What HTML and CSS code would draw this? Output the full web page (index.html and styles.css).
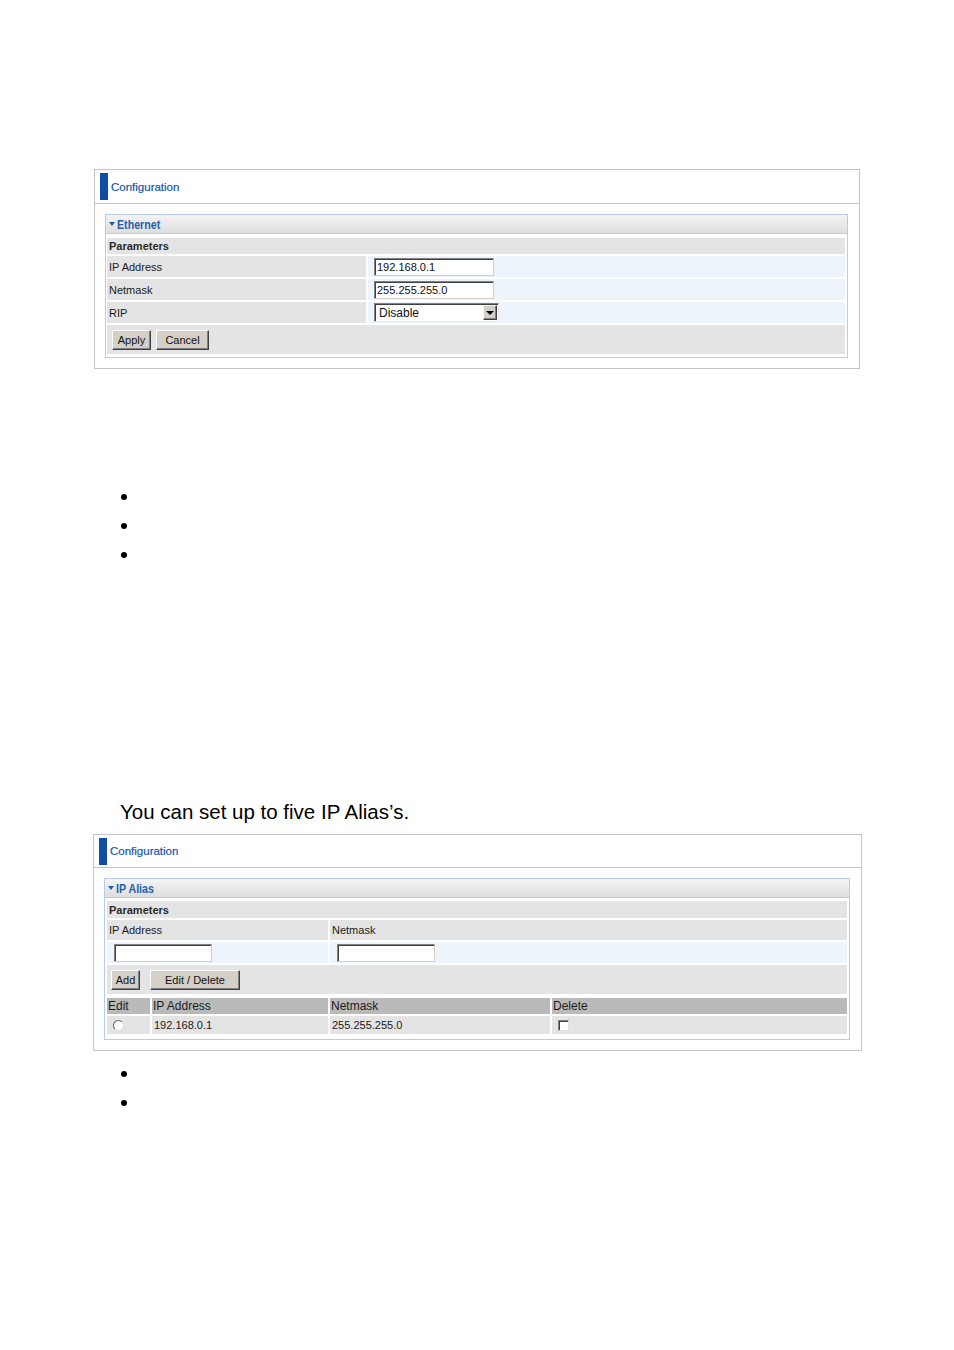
FILE: index.html
```html
<!DOCTYPE html>
<html lang="en">
<head>
    <meta charset="UTF-8">
    <meta name="viewport" content="width=device-width, initial-scale=1.0">
    <title>LAN Configuration</title>
    <link rel="stylesheet" href="styles.css">
</head>
<body>
    <div class="page">
        <!-- Ethernet settings -->
        <div class="config-box box-ethernet">
            <div class="config-head">
                <span class="config-bar"></span>
                <span class="config-title">Configuration</span>
            </div>
            <div class="config-body">
                <div class="panel">
                    <div class="panel-head"><span class="caret"></span><span class="panel-name">Ethernet</span></div>
                    <div class="panel-grid eth-grid">
                        <div class="cell cell-title row-title span-all">Parameters</div>

                        <div class="cell label row-data">IP Address</div>
                        <div class="cell value row-data"><input class="textbox eth-textbox" type="text" value="192.168.0.1"></div>

                        <div class="cell label row-data">Netmask</div>
                        <div class="cell value row-data"><input class="textbox eth-textbox" type="text" value="255.255.255.0"></div>

                        <div class="cell label row-data">RIP</div>
                        <div class="cell value row-data">
                            <div class="select">
                                <span class="select-text">Disable</span>
                                <span class="select-arrow"><span class="arrow-down"></span></span>
                            </div>
                        </div>

                        <div class="cell cell-title row-buttons span-all">
                            <button class="btn btn-apply" type="button">Apply</button>
                            <button class="btn btn-cancel" type="button">Cancel</button>
                        </div>
                    </div>
                </div>
            </div>
        </div>

        <ul class="bullets bullets-first">
            <li>&nbsp;</li>
            <li>&nbsp;</li>
            <li>&nbsp;</li>
        </ul>

        <p class="note">You can set up to five IP Alias’s.</p>

        <!-- IP alias settings -->
        <div class="config-box box-alias">
            <div class="config-head">
                <span class="config-bar"></span>
                <span class="config-title">Configuration</span>
            </div>
            <div class="config-body">
                <div class="panel">
                    <div class="panel-head"><span class="caret"></span><span class="panel-name">IP Alias</span></div>
                    <div class="panel-grid alias-grid">
                        <div class="cell cell-title alias-title span-all">Parameters</div>

                        <div class="cell label alias-label">IP Address</div>
                        <div class="cell label alias-label">Netmask</div>

                        <div class="cell value alias-input"><input class="textbox alias-textbox" type="text" value=""></div>
                        <div class="cell value alias-input"><input class="textbox alias-textbox" type="text" value=""></div>

                        <div class="cell cell-title alias-buttons span-all">
                            <button class="btn btn-add" type="button">Add</button>
                            <button class="btn btn-edit" type="button">Edit / Delete</button>
                        </div>
                    </div>

                    <div class="alias-table">
                        <div class="cell th">Edit</div>
                        <div class="cell th">IP Address</div>
                        <div class="cell th">Netmask</div>
                        <div class="cell th">Delete</div>

                        <div class="cell td td-radio"><span class="radio"></span></div>
                        <div class="cell td">192.168.0.1</div>
                        <div class="cell td">255.255.255.0</div>
                        <div class="cell td td-check"><span class="checkbox"></span></div>
                    </div>
                </div>
            </div>
        </div>

        <ul class="bullets bullets-second">
            <li>&nbsp;</li>
            <li>&nbsp;</li>
        </ul>
    </div>
</body>
</html>
```

FILE: styles.css
```css
/* Page looks like a printed manual page with two router screenshots */
body {
    font-family: "Liberation Sans", Arial, sans-serif;
    margin: 0;
    padding: 0;
    background-color: #fff;
    color: #1a1a1a;
}

.page {
    padding-top: 169px;
}

/* Outer "Configuration" frame */
.config-box {
    box-sizing: border-box;
    border: 1px solid #c4c4c4;
    background-color: #fff;
}

.box-ethernet {
    width: 766px;
    margin-left: 94px;
}

.box-alias {
    width: 769px;
    margin-left: 93px;
    margin-top: 10px;
}

.config-head {
    display: flex;
    align-items: center;
    gap: 3px;
    padding-left: 5px;
    border-bottom: 1px solid #c4c4c4;
}

.box-ethernet .config-head {
    height: 33px;
}

.box-alias .config-head {
    height: 32px;
}

.config-bar {
    width: 8px;
    height: 27px;
    background-color: #0f4fa3;
}

.config-title {
    font-size: 11.5px;
    color: #1356ab;
    -webkit-text-stroke: 0.2px #1356ab;
}

.config-body {
    padding: 10px 11px 10px 10px;
}

/* Inner collapsible panel */
.panel {
    border: 1px solid #b7cde6;
}

.panel-head {
    display: flex;
    align-items: center;
    height: 18px;
    padding-left: 3px;
    border-bottom: 1px solid #b7cde6;
    background: linear-gradient(to bottom, #f4f4f4, #dedede);
    color: #2560ad;
}

/* narrow heading face: bold Arial squeezed to Arial Narrow proportions */
.panel-name {
    display: inline-block;
    font-size: 13px;
    font-weight: bold;
    transform: scaleX(0.82);
    transform-origin: left center;
}

.caret {
    width: 0;
    height: 0;
    border-left: 3px solid transparent;
    border-right: 3px solid transparent;
    border-top: 4px solid #1d5cad;
    margin-right: 2px;
    margin-top: -1px;
}

.panel-grid {
    display: grid;
    gap: 2px;
}

.eth-grid {
    grid-template-columns: 259px 477px;
    padding: 4px 2px 3px 1px;
}

.alias-grid {
    grid-template-columns: 221px 517px;
    padding: 3px 2px 0 2px;
}

.cell {
    box-sizing: border-box;
    display: flex;
    align-items: center;
    padding-left: 2px;
    font-size: 11px;
}

.span-all {
    grid-column: 1 / -1;
}

.cell-title {
    background-color: #e4e4e4;
    font-weight: bold;
    color: #2a2a2a;
}

.label {
    background-color: #e4e4e4;
}

.value {
    background-color: #edf4fc;
}

.row-title { height: 16px; }
.row-data { height: 21px; }
.row-data.value { padding-left: 6px; }
.row-buttons { height: 29px; padding-left: 5px; gap: 5px; }

.alias-title { height: 17px; }
.alias-label { height: 20px; }
.alias-input { height: 21px; padding-left: 7px; }
.alias-buttons { height: 29px; padding-left: 4px; gap: 10px; }

/* Inset text fields */
.textbox {
    box-sizing: border-box;
    height: 18px;
    margin: 0;
    padding: 0 2px;
    border: 1px solid;
    border-color: #808080 #d4d0c8 #d4d0c8 #808080;
    box-shadow: inset 1px 1px 0 #404040;
    background-color: #fff;
    font-family: "Liberation Sans", Arial, sans-serif;
    font-size: 11px;
    color: #111;
    outline: none;
}

.eth-textbox {
    width: 120px;
}

.alias-textbox {
    width: 98px;
}

.select {
    box-sizing: border-box;
    display: flex;
    align-items: center;
    justify-content: space-between;
    width: 125px;
    height: 19px;
    padding: 1px 1px 1px 4px;
    border: 1px solid;
    border-color: #808080 #e8e8e8 #e8e8e8 #808080;
    box-shadow: inset 1px 1px 0 #404040;
    background-color: #fff;
}

.select-text {
    font-size: 12px;
    color: #111;
}

.select-arrow {
    box-sizing: border-box;
    display: flex;
    align-items: center;
    justify-content: center;
    width: 14px;
    height: 15px;
    background-color: #d4d0c8;
    border: 1px solid;
    border-color: #f4f4f4 #404040 #404040 #f4f4f4;
    box-shadow: inset -1px -1px 0 #808080;
}

.arrow-down {
    width: 0;
    height: 0;
    border-left: 4px solid transparent;
    border-right: 4px solid transparent;
    border-top: 4px solid #000;
}

/* Classic raised buttons */
.btn {
    box-sizing: border-box;
    height: 20px;
    padding: 0;
    background-color: #d4d0c8;
    border: 1px solid;
    border-color: #fff #404040 #404040 #fff;
    box-shadow: inset -1px -1px 0 #808080;
    font-family: "Liberation Sans", Arial, sans-serif;
    font-size: 11px;
    font-weight: normal;
    color: #111;
}

.btn-apply { width: 39px; }
.btn-cancel { width: 53px; }
.btn-add { width: 29px; }
.btn-edit { width: 90px; }

/* Alias list table */
.alias-table {
    display: grid;
    grid-template-columns: 43px 176px 220px 295px;
    gap: 2px;
    padding: 4px 2px 5px 2px;
}

.th {
    height: 16px;
    background-color: #bababa;
    font-size: 12px;
    color: #1a1a1a;
    padding-left: 1px;
}

.td {
    height: 18px;
    background-color: #e4e4e4;
}

.td-radio,
.td-check {
    padding-left: 6px;
}

.radio {
    box-sizing: border-box;
    width: 11px;
    height: 11px;
    border-radius: 50%;
    border: 1px solid;
    border-color: #606060 #e0e0e0 #e0e0e0 #606060;
    background-color: #fff;
}

.checkbox {
    box-sizing: border-box;
    width: 11px;
    height: 11px;
    border: 1px solid;
    border-color: #808080 #e0e0e0 #e0e0e0 #808080;
    box-shadow: inset 1px 1px 0 #404040;
    background-color: #fff;
}

/* Document text around the screenshots */
.bullets {
    list-style: none;
    margin: 0 0 0 121px;
    padding: 0;
}

.bullets-first {
    margin-top: 113px;
}

.bullets-second {
    margin-top: 8px;
}

.bullets li {
    display: flex;
    align-items: center;
    height: 29px;
    font-size: 18px;
}

.bullets li::before {
    content: "";
    width: 6px;
    height: 6px;
    border-radius: 50%;
    background-color: #000;
}

.note {
    margin: 231px 0 0 120px;
    font-size: 20.5px;
    line-height: 24px;
    color: #000;
}
```
